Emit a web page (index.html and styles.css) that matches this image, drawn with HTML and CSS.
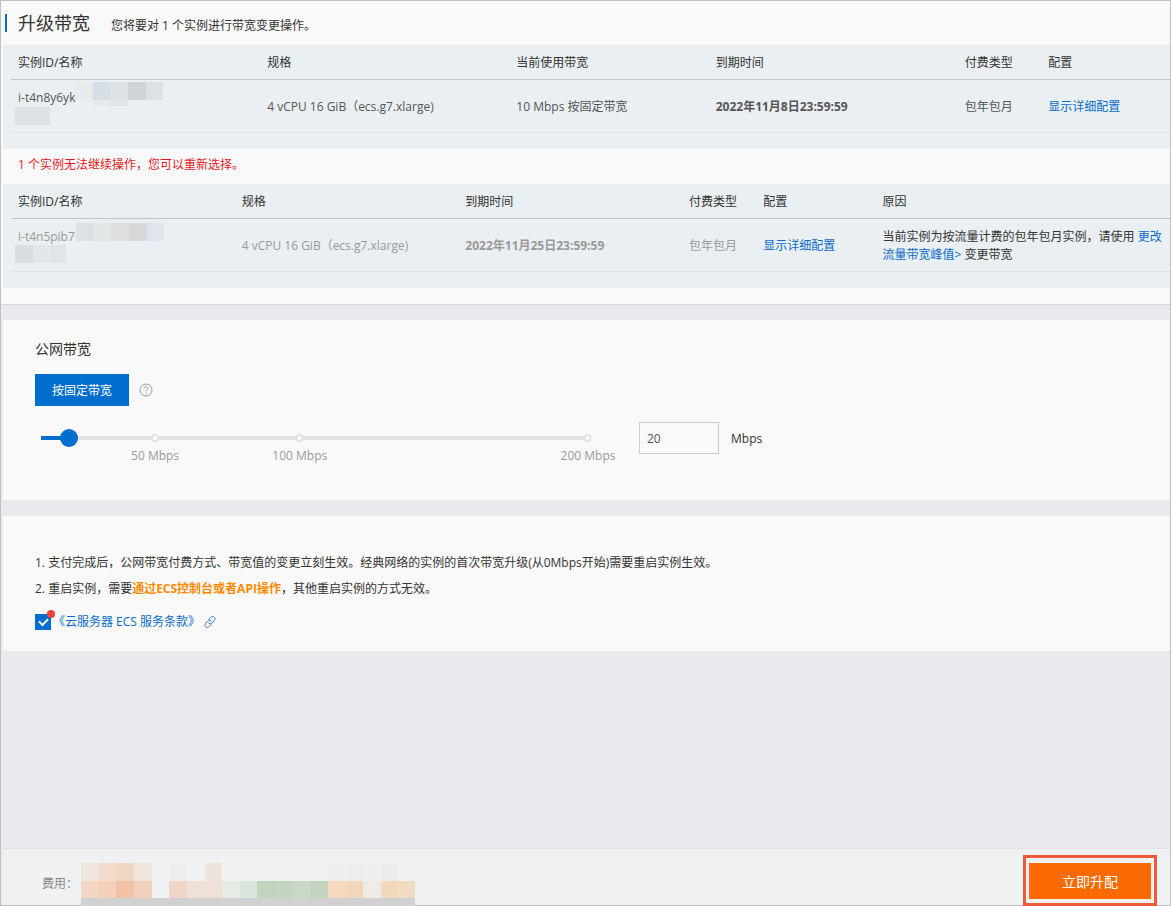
FILE: index.html
```html
<!DOCTYPE html>
<html lang="zh-CN">
<head>
<meta charset="utf-8">
<title>升级带宽</title>
<link rel="stylesheet" href="styles.css">
</head>
<body>
<div class="page">
  <section class="overview">
    <header class="title-row">
      <h1 class="title">升级带宽</h1>
      <p class="subtitle">您将要对 1 个实例进行带宽变更操作。</p>
    </header>

    <div class="table-block">
      <table class="table">
        <colgroup><col class="c-a1"><col class="c-a1"><col class="c-a3"><col class="c-a1"><col class="c-a5"><col></colgroup>
        <thead>
          <tr><th>实例ID/名称</th><th>规格</th><th>当前使用带宽</th><th>到期时间</th><th>付费类型</th><th>配置</th></tr>
        </thead>
        <tbody>
          <tr>
            <td class="id-cell">
              <span>i-t4n8y6yk</span>
              <svg class="mosaic" width="150" height="46" viewBox="0 0 150 46" aria-hidden="true">
                <path fill="#e9ebeb" d="M60 0h18v18H60z"/><path fill="#d5dfe5" d="M78 0h17v18H78z"/><path fill="#dde2e5" d="M95 0h18v18H95z"/><path fill="#cdd3d7" d="M113 0h18v18h-18z"/><path fill="#dce1e5" d="M131 0h17v18h-17z"/>
                <path fill="#e6e9ea" d="M78 18h17v6H78z"/><path fill="#e0e5e9" d="M95 18h18v6H95z"/>
                <path fill="#dde1e6" d="M0 25h18v18H0z"/><path fill="#dde3e5" d="M18 25h17v18H18z"/>
              </svg>
            </td>
            <td>4 vCPU 16 GiB（ecs.g7.xlarge)</td>
            <td>10 Mbps 按固定带宽</td>
            <td><strong>2022年11月8日23:59:59</strong></td>
            <td>包年包月</td>
            <td><a class="link" href="#detail">显示详细配置</a></td>
          </tr>
        </tbody>
      </table>
    </div>

    <p class="warning">1 个实例无法继续操作，您可以重新选择。</p>

    <div class="table-block">
      <table class="table table-disabled">
        <colgroup><col class="c-b1"><col class="c-b1"><col class="c-b1"><col class="c-b4"><col class="c-b5"><col></colgroup>
        <thead>
          <tr><th>实例ID/名称</th><th>规格</th><th>到期时间</th><th>付费类型</th><th>配置</th><th>原因</th></tr>
        </thead>
        <tbody>
          <tr>
            <td class="id-cell">
              <span>i-t4n5pib7</span>
              <svg class="mosaic" width="150" height="46" viewBox="0 0 150 46" aria-hidden="true">
                <path fill="#dde1e5" d="M61 2h18v18H61z"/><path fill="#e4e7e7" d="M79 2h17v18H79z"/><path fill="#dddede" d="M96 2h18v18H96z"/><path fill="#d6d8da" d="M114 2h18v18h-18z"/><path fill="#dfe4ed" d="M132 2h17v18h-17z"/>
                <path fill="#d9dee2" d="M0 24h18v18H0z"/><path fill="#e3e7ea" d="M18 24h17v18H18z"/><path fill="#e1e5e9" d="M35 24h16v18H35z"/>
              </svg>
            </td>
            <td>4 vCPU 16 GiB（ecs.g7.xlarge)</td>
            <td><strong>2022年11月25日23:59:59</strong></td>
            <td>包年包月</td>
            <td><a class="link" href="#detail">显示详细配置</a></td>
            <td class="reason">当前实例为按流量计费的包年包月实例，请使用 <a class="link" href="#peak">更改流量带宽峰值&gt;</a> 变更带宽</td>
          </tr>
        </tbody>
      </table>
    </div>
  </section>

  <section class="panel bandwidth">
    <h2 class="panel-title">公网带宽</h2>
    <div class="mode-row">
      <button class="mode" type="button">按固定带宽</button>
      <button class="help" type="button" aria-label="帮助">
        <svg width="14" height="14" viewBox="0 0 14 14" fill="none" stroke="#999" aria-hidden="true">
          <circle cx="7" cy="7" r="6"/>
          <path d="M5 5.700c0-1.300.8-2.100 2-2.100s2 .8 2 1.800c0 1.200-2 1.500-2 3"/>
          <path d="M7 9.500v1.200"/>
        </svg>
      </button>
    </div>
    <div class="slider-row">
      <div class="slider">
        <input class="range" type="range" min="10" max="200" value="20" aria-label="带宽">
        <div class="marks">
          <span class="mark" style="left:21%">50 Mbps</span>
          <span class="mark" style="left:47.400%">100 Mbps</span>
          <span class="mark" style="left:100%">200 Mbps</span>
        </div>
      </div>
      <input class="amount" id="amount" type="text" value="20">
      <label class="unit" for="amount">Mbps</label>
    </div>
  </section>

  <section class="panel terms">
    <p class="note">1. 支付完成后，公网带宽付费方式、带宽值的变更立刻生效。经典网络的实例的首次带宽升级(从0Mbps开始)需要重启实例生效。</p>
    <p class="note">2. 重启实例，需要<strong class="accent">通过ECS控制台或者API操作</strong>，其他重启实例的方式无效。</p>
    <div class="agree">
      <span class="check-wrap"><input class="check" id="agree" type="checkbox" checked><span class="dot"></span></span>
      <label class="agree-label" for="agree"><a class="link" href="#terms">《云服务器 ECS 服务条款》</a></label>
      <svg width="12" height="12" viewBox="0 0 12 12" fill="none" stroke="#3f7fc4" stroke-linecap="round" aria-hidden="true">
        <path d="M4.900 3.400 6.900 1.400a2.300 2.300 0 0 1 3.600 0 2.300 2.300 0 0 1 0 3L7.700 7.200a2.100 2.100 0 0 1-3 0"/>
        <path d="M7.100 8.600 5.100 10.600a2.300 2.300 0 0 1-3.600 0 2.300 2.300 0 0 1 0-3L4.300 4.800a2.100 2.100 0 0 1 3 0"/>
      </svg>
    </div>
  </section>

  <footer class="footer">
    <span class="fee">费用：</span>
    <svg class="fee-mosaic" width="334" height="43" viewBox="0 0 334 43" aria-hidden="true">
      <path fill="#f0e6e0" d="M0 0h18v18H0z"/><path fill="#f1dace" d="M18 0h17v18H18z"/><path fill="#f1d6c4" d="M35 0h18v18H35z"/><path fill="#f1e4dc" d="M53 0h18v18H53z"/><path fill="#f0eeee" d="M88 0h18v18H88z"/><path fill="#f0e3dc" d="M124 0h17v18h-17z"/>
      <path fill="#efeeee" d="M247 0h18v18h-18z"/><path fill="#efede9" d="M265 0h17v18h-17z"/><path fill="#efeded" d="M282 0h18v18h-18z"/><path fill="#eeecea" d="M300 0h18v18h-18z"/>
      <path fill="#f2d6c6" d="M0 18h18v17H0z"/><path fill="#f2d0b9" d="M18 18h17v17H18z"/><path fill="#f2c2a5" d="M35 18h18v17H35z"/><path fill="#f1d0bb" d="M53 18h18v17H53z"/><path fill="#f0d5c6" d="M88 18h18v17H88z"/><path fill="#efe0d8" d="M106 18h35v17h-35z"/>
      <path fill="#e6ebe6" d="M141 18h18v17h-18z"/><path fill="#d9e4da" d="M159 18h17v17h-17z"/><path fill="#c2d4bc" d="M176 18h18v17h-18z"/><path fill="#c3d5c0" d="M194 18h18v17h-18z"/><path fill="#cad8c8" d="M212 18h17v17h-17z"/><path fill="#c3d4bf" d="M229 18h18v17h-18z"/>
      <path fill="#f2d9c0" d="M247 18h18v17h-18z"/><path fill="#f1d6b8" d="M265 18h17v17h-17z"/><path fill="#efece7" d="M282 18h18v17h-18z"/><path fill="#f2d9be" d="M300 18h18v17h-18z"/><path fill="#f0dcc3" d="M318 18h16v17h-16z"/>
      <path fill="#d1d1d1" d="M0 35h334v8H0z"/>
    </svg>
    <div class="highlight"><button class="submit" type="button">立即升配</button></div>
  </footer>
</div>
</body>
</html>
```
FILE: styles.css
```css
*,
*::before {
  box-sizing: border-box;
}

body,
h1,
h2,
p {
  margin: 0;
  font-weight: 400;
}

body,
button,
input {
  font-family: "Open Sans", "Noto Sans CJK SC", sans-serif;
  font-size: 12px;
}

body {
  color: #333;
  line-height: 18px;
}

button {
  padding: 0;
  border: 0;
  cursor: pointer;
}

.page {
  display: flex;
  flex-direction: column;
  min-height: 100vh;
  border: 1px solid #c0c0c0;
  background: #e8eaed;
}

.link {
  color: #0a6ccb;
  text-decoration: none;
}

/* Instance overview */

.overview {
  padding: 0 0 16px 2px;
  border-bottom: 1px solid #d6d7da;
  background: #f9f9f9;
}

.title-row {
  display: flex;
  align-items: center;
  gap: 21px;
  height: 44px;
  padding-left: 2px;
}

.title {
  padding-left: 11px;
  border-left: 2px solid #006ecc;
  font-size: 18px;
  line-height: 18px;
}

.subtitle {
  padding-top: 6px;
}

.table-block {
  padding: 0 0 16px 8px;
  background: #e9eff2;
}

.table {
  width: 100%;
  table-layout: fixed;
  border-collapse: collapse;
  text-align: left;
}

.c-a1 { width: 21.5%; }
.c-a3 { width: 17.2%; }
.c-a5 { width: 7.2%; }
.c-b1 { width: 19.3%; }
.c-b4 { width: 6.4%; }
.c-b5 { width: 10.3%; }

.table th,
.table td {
  padding: 2px 0 0 7px;
}

.table th {
  height: 34px;
  border-bottom: 1px solid #c0c4c7;
  font-weight: 400;
}

.table td {
  height: 53px;
  border-bottom: 1px solid #dfe3e4;
  color: #555;
  white-space: nowrap;
}

.table-disabled th {
  height: 35px;
}

.table-disabled td {
  color: #999;
}

.table .reason {
  color: #333;
  white-space: normal;
}

.table .id-cell {
  position: relative;
  padding-top: 9px;
  vertical-align: top;
}

.mosaic {
  position: absolute;
  top: 2px;
  left: 4px;
}

.warning {
  padding: 7px 0 10px 15px;
  color: #e8191f;
}

/* Panels */

.panel {
  margin: 15px 0 0 2px;
  padding: 20px 32px;
  background: #f9f9f9;
}

.panel + .panel {
  margin-top: 16px;
}

.panel-title {
  font-size: 14px;
  line-height: 18px;
}

.mode-row {
  display: flex;
  align-items: center;
  gap: 10px;
  margin-top: 16px;
}

.mode {
  height: 32px;
  padding: 0 17px;
  background: #006ecc;
  color: #fff;
}

.help {
  display: flex;
  background: none;
}

.bandwidth {
  padding-bottom: 46px;
}

.slider-row {
  display: flex;
  align-items: center;
  margin-top: 16px;
}

.slider {
  position: relative;
  flex: 0 1 566px;
  height: 32px;
  margin-left: -4px;
}

.range {
  display: block;
  width: 100%;
  height: 32px;
  margin: 0;
  appearance: none;
  background:
    linear-gradient(#006ecc, #006ecc) 10px 14px / 28px 4px no-repeat,
    linear-gradient(#e3e3e3, #e3e3e3) 10px 14px / calc(100% - 19px) 4px no-repeat;
}

.range::-webkit-slider-thumb {
  width: 18px;
  height: 18px;
  border: 0;
  border-radius: 50%;
  appearance: none;
  background: #006ecc;
}

.marks {
  position: absolute;
  top: 12px;
  right: 9px;
  left: 9px;
  pointer-events: none;
}

.mark {
  position: absolute;
  padding-top: 13px;
  color: #999;
  white-space: nowrap;
  transform: translateX(-50%);
}

.mark::before {
  position: absolute;
  top: 0;
  left: calc(50% - 4px);
  width: 8px;
  height: 8px;
  border: 2px solid #e3e3e3;
  border-radius: 50%;
  background: #fff;
  content: "";
}

.amount {
  width: 80px;
  height: 32px;
  margin: 0 12px 0 42px;
  padding: 0 7px;
  border: 1px solid #ccc;
  background: #f9f9f9;
  color: #555;
}

.unit {
  padding-top: 2px;
}

/* Notes and agreement */

.terms {
  padding: 34px 32px 20px;
}

.note {
  line-height: 26px;
}

.accent {
  color: #ff8a00;
}

.agree {
  display: flex;
  align-items: center;
  margin-top: 11px;
}

.agree-label {
  margin: 0 4px 0 2px;
}

.check-wrap {
  position: relative;
  display: flex;
}

.check {
  display: grid;
  place-items: center;
  width: 16px;
  height: 16px;
  margin: 0;
  appearance: none;
  background: #006ecc;
}

.check:checked::before {
  width: 9px;
  height: 6px;
  margin-bottom: 2px;
  border: solid #fff;
  border-width: 0 0 2px 2px;
  transform: rotate(-45deg);
  content: "";
}

.dot {
  position: absolute;
  top: -4px;
  right: -4px;
  width: 8px;
  height: 8px;
  border-radius: 50%;
  background: #f04134;
}

/* Footer */

.footer {
  display: flex;
  align-items: flex-end;
  height: 57px;
  margin: auto 0 0 2px;
  padding: 0 13px 0 39px;
  border-top: 1px solid #dfe1e4;
  background: #eff1f3;
}

.fee {
  margin-bottom: 12px;
  color: #888;
}

.fee-mosaic {
  margin-left: 3px;
  margin-bottom: -1px;
}

.highlight {
  margin: 0 0 -1px auto;
  padding: 5px 3px 4px;
  border: 3px solid #f05a38;
}

.submit {
  display: block;
  width: 122px;
  height: 36px;
  background: #fa6a00;
  color: #fff;
  font-size: 14px;
}
```
